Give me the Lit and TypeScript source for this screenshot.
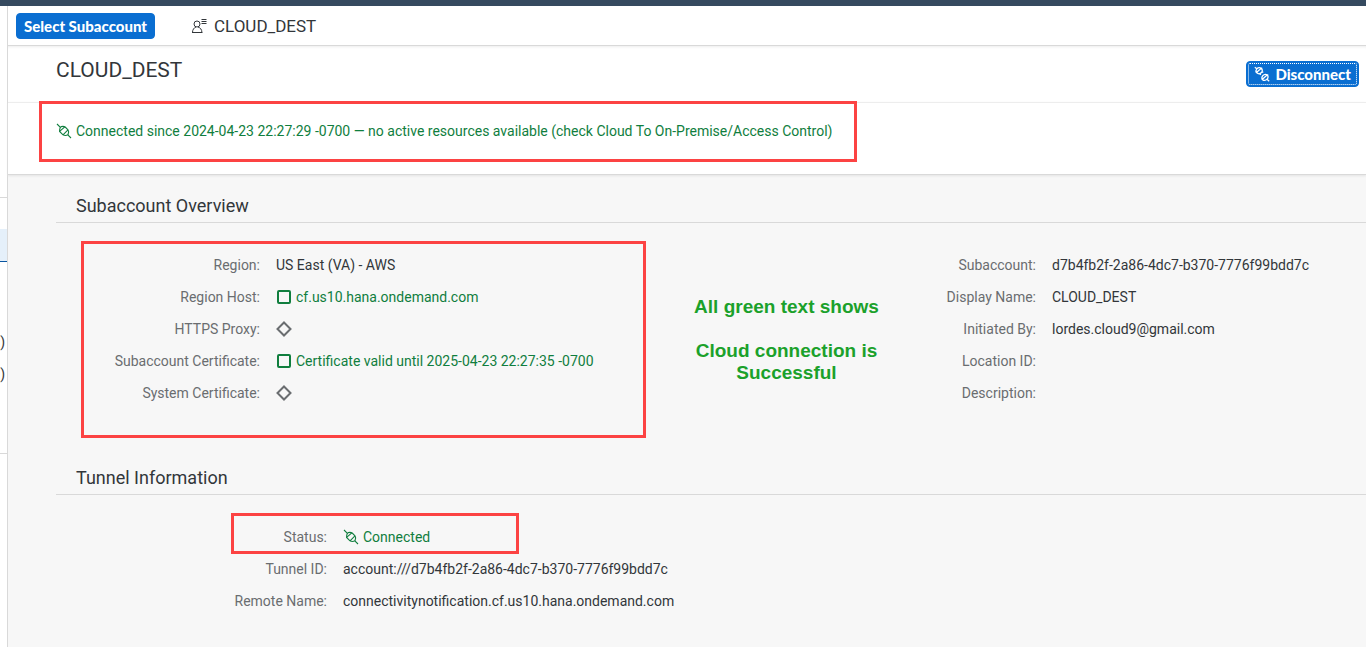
import { LitElement, html, css, svg, nothing } from "lit";
import { customElement, property } from "lit/decorators.js";

type Kind = "plain" | "ok" | "neutral" | "plug";
interface Field {
  label: string;
  value?: string;
  kind?: Kind;
}

const overviewFields: Field[] = [
  { label: "Region:", value: "US East (VA) - AWS" },
  { label: "Region Host:", value: "cf.us10.hana.ondemand.com", kind: "ok" },
  { label: "HTTPS Proxy:", kind: "neutral" },
  { label: "Subaccount Certificate:", value: "Certificate valid until 2025-04-23 22:27:35 -0700", kind: "ok" },
  { label: "System Certificate:", kind: "neutral" },
];

const accountFields: Field[] = [
  { label: "Subaccount:", value: "d7b4fb2f-2a86-4dc7-b370-7776f99bdd7c" },
  { label: "Display Name:", value: "CLOUD_DEST" },
  { label: "Initiated By:", value: "lordes.cloud9@gmail.com" },
  { label: "Location ID:" },
  { label: "Description:" },
];

const tunnelFields: Field[] = [
  { label: "Status:", value: "Connected", kind: "plug" },
  { label: "Tunnel ID:", value: "account:///d7b4fb2f-2a86-4dc7-b370-7776f99bdd7c" },
  { label: "Remote Name:", value: "connectivitynotification.cf.us10.hana.ondemand.com" },
];

const glyphs = {
  plug: svg`<g stroke-width="1.1"><path d="M1 1L4.400 4.400M11.600 11.600L15 15"/><path d="M3.600 8.400C3.600 6 4 4.200 5.400 3.600C6.800 3.200 8.200 3.400 9.200 4L12 6.800C12.800 8 12.800 10 12 11.600C10.600 12.600 8.400 12.600 7 11.800Z"/><path d="M3.600 8.400L8.800 3.800M7 11.800L12 6.800"/></g>`,
  unplug: svg`<g stroke-width="1.3"><path d="M.8 1.200L2.800 2.800M13 13.200L15.200 15.200"/><path d="M2.400 6.600L7.400 2.200C5.600 1.400 3.800 1.800 2.800 2.800C1.800 4 1.800 5.400 2.400 6.600C4 8 6 8 7.200 6.800C8.400 5.600 8.400 3.600 7.400 2.200M5.600 7.600L6.800 8.800M8 5.600L9.200 6.600"/><path d="M8.200 13.400L13.400 8.800C11.600 8 9.800 8.400 8.800 9.600C7.800 10.800 7.600 12 8.200 13.400C9.800 14.600 11.800 14.600 13 13.200C14.200 12 14.200 10.200 13.400 8.800"/></g>`,
  ok: svg`<rect x="2" y="2" width="12" height="12" rx="1" stroke-width="2"/>`,
  neutral: svg`<path stroke-width="2" d="M8 1.500L14.500 8L8 14.500L1.500 8Z"/>`,
  person: svg`<circle cx="6" cy="6" r="3"/><path d="M1.500 14.500C1.500 11.500 3 9.800 5 9M7 9C9.400 9.800 10.900 11.500 10.900 14.500M1 14.500H11.400M10.500 1.500H15.500M10.500 3.500H15.500M10.500 5.500H15.500"/>`,
};

@customElement("ui-icon")
export class UiIcon extends LitElement {
  @property() name: keyof typeof glyphs = "ok";

  static styles = css`
    :host {
      display: inline-flex;
      flex: none;
    }
    .glyph {
      width: 16px;
      height: 16px;
      fill: none;
      stroke: currentColor;
    }
  `;

  render() {
    return html`<svg class="glyph" viewBox="0 0 16 16" aria-hidden="true">${glyphs[this.name]}</svg>`;
  }
}

@customElement("field-list")
export class FieldList extends LitElement {
  @property({ attribute: false }) fields: Field[] = [];

  static styles = css`
    :host {
      display: block;
    }
    .list {
      margin: 0;
    }
    .row {
      display: grid;
      grid-template-columns: var(--label-width, 200px) minmax(0, 1fr);
      column-gap: 16px;
      align-items: center;
      height: 32px;
      white-space: nowrap;
    }
    .label {
      text-align: right;
      color: #6a6d70;
    }
    .value {
      display: flex;
      align-items: center;
      gap: 4px;
      margin: 0;
      color: #32363a;
    }
    .ok,
    .plug {
      color: #107e3e;
    }
    .neutral {
      color: #6a6d70;
    }
  `;

  render() {
    return html`<dl class="list">
      ${this.fields.map((f) => {
        const kind = f.kind ?? "plain";
        return html`<div class="row">
          <dt class="label">${f.label}</dt>
          <dd class="value ${kind}">
            ${kind === "plain" ? nothing : html`<ui-icon name=${kind}></ui-icon>`}
            <span>${f.value ?? ""}</span>
          </dd>
        </div>`;
      })}
    </dl>`;
  }
}

@customElement("app-root")
export class AppRoot extends LitElement {
  static styles = css`
    :host {
      display: flex;
      flex-direction: column;
      min-height: 100vh;
      box-sizing: border-box;
      border-top: 6px solid #354a5f;
      overflow: hidden;
      background: #f7f7f7;
      color: #32363a;
      font: 14px/20px Roboto, "Noto Sans", sans-serif;
    }
    .shell {
      flex: 1;
      display: flex;
    }
    .nav {
      flex: none;
      width: 7px;
      padding-top: 191px;
      background: #fff;
      border-right: 1px solid #d9d9d9;
      overflow: hidden;
    }
    .nav-item {
      display: flex;
      align-items: center;
      justify-content: flex-end;
      height: 32px;
      padding-right: 2px;
      color: #32363a;
    }
    .nav-rule {
      height: 32px;
      box-sizing: border-box;
      border-top: 1px solid #d9d9d9;
    }
    .selected {
      box-sizing: border-box;
      height: 33px;
      background: #e5f0fa;
      border-bottom: 1px solid #0854a0;
    }
    .spaced {
      margin-top: 64px;
    }
    .end {
      margin-top: 63px;
    }
    .main {
      flex: 1;
      min-width: 0;
    }
    .toolbar {
      display: flex;
      align-items: center;
      height: 39px;
      padding-left: 8px;
      background: #fff;
      border-bottom: 1px solid #d9d9d9;
    }
    .button {
      display: inline-flex;
      align-items: center;
      justify-content: center;
      gap: 5px;
      height: 26px;
      padding: 0 7px;
      border: 1px solid #0a6ed1;
      border-radius: 4px;
      background: #0a6ed1;
      color: #fff;
      font: 900 15px/20px Lato, sans-serif;
      white-space: nowrap;
    }
    .focused {
      outline: 1px dotted #fff;
      outline-offset: -3px;
    }
    .crumb {
      display: flex;
      align-items: center;
      gap: 7px;
      margin-left: 36px;
      font-size: 17px;
    }
    .header {
      display: flex;
      align-items: center;
      justify-content: space-between;
      height: 56px;
      padding: 0 7px 0 48px;
      background: #fff;
      box-shadow: inset 0 3px 3px -2px #ededed;
    }
    .title {
      margin: 0 0 8px;
      font-size: 21px;
      font-weight: 400;
      line-height: 26px;
    }
    .message {
      position: relative;
      display: flex;
      align-items: center;
      gap: 4px;
      height: 73px;
      box-sizing: border-box;
      padding: 0 48px 15px;
      background: #fff;
      border-top: 1px solid #ededed;
      border-bottom: 1px solid #d9d9d9;
      box-shadow: 0 1px 2px #e4e4e4;
      color: #107e3e;
      white-space: nowrap;
    }
    .content {
      padding: 15px 0 30px 48px;
    }
    .section-title {
      margin: 0;
      height: 32px;
      padding-left: 20px;
      border-bottom: 1px solid #d9d9d9;
      font-size: 18px;
      font-weight: 400;
      line-height: 32px;
    }
    .overview {
      position: relative;
      display: grid;
      grid-template-columns: 590fr 281fr 439fr;
      padding: 26px 0 53px;
    }
    .left {
      --label-width: 204px;
    }
    .right {
      --label-width: 109px;
    }
    .tunnel {
      position: relative;
      padding-top: 26px;
    }
    .wide {
      --label-width: 271px;
    }
    .note {
      padding-top: 47px;
      text-align: center;
      color: #1ba12b;
      font: bold 19px/22px "Liberation Sans", Arial, sans-serif;
    }
    .note-text {
      max-width: 200px;
      margin: 0 auto 22px;
    }
    .mark {
      position: absolute;
      box-sizing: border-box;
      border: 3px solid #fc4343;
      pointer-events: none;
    }
    .mark-message {
      left: 31px;
      top: -2px;
      width: 818px;
      height: 61px;
    }
    .mark-overview {
      left: 25px;
      top: 18px;
      width: 565px;
      height: 197px;
    }
    .mark-status {
      left: 175px;
      top: 18px;
      width: 288px;
      height: 41px;
    }
  `;

  render() {
    return html`
      <div class="shell">
        <nav class="nav">
          <div class="nav-rule"></div>
          <div class="nav-item selected"></div>
          <div class="nav-item spaced">)</div>
          <div class="nav-item">)</div>
          <div class="nav-rule end"></div>
        </nav>
        <main class="main">
          <div class="toolbar">
            <button class="button" type="button">Select Subaccount</button>
            <span class="crumb"><ui-icon name="person"></ui-icon>CLOUD_DEST</span>
          </div>
          <header class="header">
            <h1 class="title">CLOUD_DEST</h1>
            <button class="button focused" type="button"><ui-icon name="unplug"></ui-icon>Disconnect</button>
          </header>
          <div class="message" role="status">
            <ui-icon name="plug"></ui-icon>
            <span>Connected since 2024-04-23 22:27:29 -0700 — no active resources available (check Cloud To On-Premise/Access Control)</span>
            <div class="mark mark-message"></div>
          </div>
          <div class="content">
            <section>
              <h2 class="section-title">Subaccount Overview</h2>
              <div class="overview">
                <field-list class="left" .fields=${overviewFields}></field-list>
                <div class="note">
                  <p class="note-text">All green text shows</p>
                  <p class="note-text">Cloud connection is Successful</p>
                </div>
                <field-list class="right" .fields=${accountFields}></field-list>
                <div class="mark mark-overview"></div>
              </div>
            </section>
            <section>
              <h2 class="section-title">Tunnel Information</h2>
              <div class="tunnel">
                <field-list class="wide" .fields=${tunnelFields}></field-list>
                <div class="mark mark-status"></div>
              </div>
            </section>
          </div>
        </main>
      </div>
    `;
  }
}
